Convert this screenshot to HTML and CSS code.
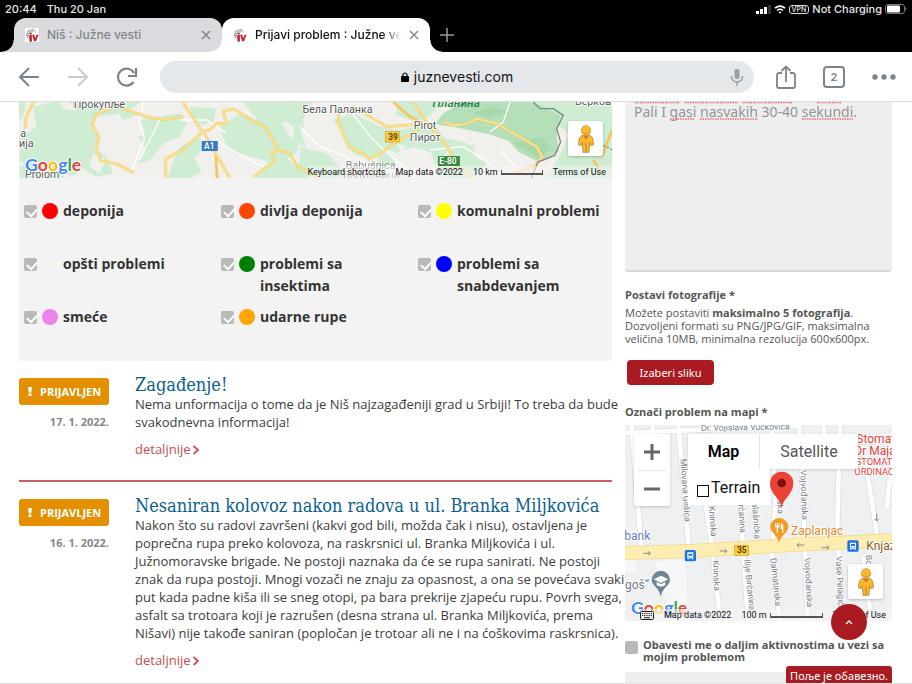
FILE: index.html
```html
<!DOCTYPE html>
<html lang="sr-Latn">
<head>
<meta charset="utf-8">
<meta name="viewport" content="width=device-width, initial-scale=1">
<title>Prijavi problem : Južne vesti</title>
<link rel="stylesheet" href="styles.css">
</head>
<body>
<svg class="defs" aria-hidden="true">
  <symbol id="logo" viewBox="0 0 42 42">
    <path d="M8 30a15 15 0 1 1 25-17M6 22a16 16 0 0 1 10-17M13 32a12 12 0 0 1 10-21M2 22h8M24 2v8M8 8l5 5" fill="none" stroke="#a5a5a8" stroke-width="3"/>
    <path d="M14 21h6v20h-6zM14 14h6v5h-6z" fill="#3d3d42"/>
    <path d="M13 20h7v18h-6zM21 20h7l3 11 4-11h6l-8 20h-6z" fill="#d3222f"/>
  </symbol>
  <symbol id="pegman" viewBox="0 0 48 84">
    <path d="M12 31h24l8 8 3 20-8 3-4-9-2 29H15l-2-29-4 9-8-3 3-20z" fill="#fbb829" stroke="#9b7636" stroke-width="2"/>
    <path d="M15 33h18l-9 11z" fill="#e5762b"/>
    <path d="M24 54v27" stroke="#c77f1f" stroke-width="3"/>
    <circle cx="24" cy="16" r="14" fill="#fbb829" stroke="#c08a2e" stroke-width="2"/>
    <path d="M11 22q13 9 26 0" fill="none" stroke="#e08a22" stroke-width="2"/>
  </symbol>
  <symbol id="chev" viewBox="0 0 8 12"><path d="M1.500 2l4.500 4-4.500 4" fill="none" stroke="currentColor" stroke-width="1.700"/></symbol>
  <symbol id="cross" viewBox="0 0 10 10"><path d="M1 1l8 8M9 1l-8 8" fill="none" stroke="currentColor" stroke-width="1.400"/></symbol>
  <symbol id="bus" viewBox="0 0 36 36">
    <rect x="1" y="1" width="34" height="34" rx="5" fill="#1a73e8"/>
    <path d="M9 8h18v18H9zM10 25h4v4h-4zM22 25h4v4h-4z" fill="#fff"/>
    <path d="M12 12h12v6H12zM12 21h3v3h-3zM21 21h3v3h-3z" fill="#1a73e8"/>
  </symbol>
</svg>

<header class="browser">
  <div class="status">
    <span>20:44</span><span>Thu 20 Jan</span>
    <div class="status-right">
      <svg width="15" height="9" viewBox="0 0 15 9" aria-hidden="true"><path d="M0 6h3v3H0zM4 4h3v5H4zM8 2h3v7H8z" fill="#fff"/><path d="M12 0h3v9h-3z" fill="#333"/></svg>
      <svg width="12" height="9" viewBox="0 0 12 9" aria-hidden="true"><path d="M1 3.200q5-4.200 10 0M3 5.500q3-2.500 6 0" fill="none" stroke="#fff" stroke-width="1.600"/><path d="M4.500 7q1.500-1 3 0L6 8.800z" fill="#fff"/></svg>
      <span class="vpn">VPN</span>
      <span>Not Charging</span>
      <svg width="22" height="10" viewBox="0 0 22 10" aria-hidden="true"><rect x=".5" y=".5" width="19" height="9" rx="2.500" fill="none" stroke="#777"/><rect x="2" y="1.500" width="13" height="7" rx="1" fill="#fff"/><path d="M21 3.500v3" stroke="#777"/></svg>
    </div>
  </div>
  <nav class="tabs" aria-label="Tabs">
    <div class="tab">
      <svg class="favicon on-white" aria-hidden="true"><use href="#logo"/></svg>
      <a class="tab-title" href="#">Niš : Južne vesti</a>
      <button class="plain" aria-label="Close tab"><svg width="10" height="10"><use href="#cross"/></svg></button>
    </div>
    <div class="tab active">
      <svg class="favicon" aria-hidden="true"><use href="#logo"/></svg>
      <a class="tab-title" href="#">Prijavi problem : Južne vesti</a>
      <button class="plain" aria-label="Close tab"><svg width="10" height="10"><use href="#cross"/></svg></button>
    </div>
    <button class="plain new-tab" aria-label="New tab"><svg width="14" height="14" viewBox="0 0 14 14"><path d="M7 0v14M0 7h14" stroke="#9a9a9d" stroke-width="1.500"/></svg></button>
  </nav>
  <div class="toolbar">
    <div class="nav-buttons">
      <button class="plain" aria-label="Back"><svg width="22" height="20" viewBox="0 0 22 20"><path d="M21 10H2M11 1l-9 9 9 9" fill="none" stroke="#7b8488" stroke-width="2"/></svg></button>
      <button class="plain" aria-label="Forward"><svg width="22" height="20" viewBox="0 0 22 20"><path d="M1 10h19M11 1l9 9-9 9" fill="none" stroke="#cacccd" stroke-width="2"/></svg></button>
      <button class="plain" aria-label="Reload"><svg width="22" height="20" viewBox="0 0 22 20"><path d="M17.500 15A8.500 8.500 0 1 1 18 6" fill="none" stroke="#7b8488" stroke-width="2.200"/><path d="M20 1v8h-8" fill="none" stroke="#7b8488" stroke-width="2.200"/></svg></button>
    </div>
    <div class="address">
      <svg width="8" height="10" viewBox="0 0 8 10" aria-hidden="true"><rect y="4" width="8" height="6" rx="1"/><path d="M2 5V3a2 2 0 0 1 4 0v2" fill="none" stroke="#000" stroke-width="1.200"/></svg>
      <span>juznevesti.com</span>
      <button class="plain mic" aria-label="Voice search"><svg width="14" height="18" viewBox="0 0 14 18"><rect x="4.500" y="1" width="5" height="10" rx="2.500" fill="#9a9fa4"/><path d="M1.500 8v1a5.500 5 0 0 0 11 0V8M7 14v4" fill="none" stroke="#9a9fa4" stroke-width="1.500"/></svg></button>
    </div>
    <div class="actions">
      <button class="plain" aria-label="Share"><svg width="20" height="24" viewBox="0 0 20 24"><path d="M6 8H3a2 2 0 0 0-2 2v11a2 2 0 0 0 2 2h14a2 2 0 0 0 2-2V10a2 2 0 0 0-2-2h-3M10 17V2M5.500 6L10 1.500 14.500 6" fill="none" stroke="#7b8488" stroke-width="1.800"/></svg></button>
      <button class="plain tab-count">2</button>
      <button class="plain" aria-label="Menu"><svg width="24" height="6" viewBox="0 0 24 6"><g fill="#7b8488"><circle cx="3" cy="3" r="2.700"/><circle cx="12" cy="3" r="2.700"/><circle cx="21" cy="3" r="2.700"/></g></svg></button>
    </div>
  </div>
</header>

<main class="page">
  <section class="reports">
    <div class="map region-map">
      <svg class="map-canvas" viewBox="58 6 1778 228" preserveAspectRatio="xMinYMin slice">
        <path fill="#f1f0ec" d="M58 6h1778v228H58z"/>
        <g fill="#ceedd2">
          <path d="M58 6h22l-8 40-14 20zM100 20l60-14h90l50 20 40-6 30 20-80 10-10 30 20 40-20 20 40 30 20 50-50 10-40-26-30 24-90-30-40 10-30-30 20-70 30-30zM340 6h80l-30 24 40 10-60 20z"/>
          <path d="M420 60l120-20 20 30-20 40-50 20-40 50-34 10 20-50-20-30 20-10zM540 140l60-26 14 30-30 30 20 40-30 20h-70l20-60zM570 20l80 6-10 40-36 10-24-20zM660 80l60-40 50 20 10-20 60 20 30 50 30 10-10 40-60 40-40-20-70-20-40-20-10-30zM730 6h180v90l-50-30-60 10-40-30zM60 90l40 10 20 50-60 40zM60 200l60-20 80 54H60z"/>
          <path d="M780 210l60-50 40 30 40 0 40 44H770zM890 6h50l-20 30-20 50 20 60-40-30zM1000 60l60-20 80 40 60 10 20 30-60 20-50 40-50-20-30-60zM1200 90l100-20 40 50-40 40-60-20-50 20-40-20zM1290 110l80 10 60 20 30 50-40 44h-90l-30-50zM1190 6h140l-40 40-40 20-60-20zM900 140l80 20 60 60-10 14H900zM1130 150l40 10 20 40-50 10zM1600 6h236v228h-200l40-60 30-70z"/>
        </g>
        <path fill="#b5dfb8" d="M1330 40l60-34h200l30 10 60 30-10 60 6 50-60 30-60-30-30-34-60-20-100-20-60-10z"/>
        <path fill="#a3d4a7" opacity=".7" d="M1420 40l60-20 50 20-70 10zM1540 130l80-20 30 30-30 40-30-20z"/>
        <path fill="#f1f0ec" d="M280 160l40 20-20 40-30-20zM180 6h30l20 26-40-6zM1420 140l60 10 40 30-40 14-50-20zM1190 130l30 10-16 20z"/>
        <path d="M430 6l-10 60 14 50-40 100M480 60l-60 120M540 60l80 0 60 40M650 120l80 50 60 30M900 80l60 60 80 30 40 50M1040 20l80 100 90 80M1290 150l100-10 80 50M1530 6l-20 60-40 30M1350 150l-50 60M1500 150l50 50" fill="none" stroke="#fff" stroke-width="4"/>
        <path d="M102 6L80 50l-4 36M340 22l-50 20-12 30 20 40-8 30 12 40 50 10 50 26M360 22l80 28 60 10 50-12M548 6l60 90-60 54-50 26v58M600 96l30-6 20-20h30l-10-36 30-8 40 24 30 20 26 10 40 70-20 6 6 30-60 44M830 150l40 10 24 40 60 30M1016 30l0 40 30 70 50 24 10 14 40-20 30-24 80-44M1060 20l100 60 80-6M1330 66l30 10 40-4 30-16 60 14 40 24 80 46 16 30-20 26-60 24M1836 90l-30 80M1780 180l20 30M610 94l40 70 40 70M648 160l4 74M1240 6l40 60 60 70 30 60 50 38M1290 80l-60-30-50-44" fill="none" stroke="#f5c65c" stroke-width="8" stroke-linejoin="round"/>
        <path d="M102 6L80 50l-4 36M340 22l-50 20-12 30 20 40-8 30 12 40 50 10 50 26M360 22l80 28 60 10 50-12M548 6l60 90-60 54-50 26v58M600 96l30-6 20-20h30l-10-36 30-8 40 24 30 20 26 10 40 70-20 6 6 30-60 44M830 150l40 10 24 40 60 30M1016 30l0 40 30 70 50 24 10 14 40-20 30-24 80-44M1060 20l100 60 80-6M1330 66l30 10 40-4 30-16 60 14 40 24 80 46 16 30-20 26-60 24M1240 6l40 60 60 70 30 60 50 38M610 94l40 70 40 70" fill="none" stroke="#fbe493" stroke-width="5"/>
        <path d="M1600 6l20 20h40l30 20-20 40 12 40-18 40-50 20-20 48" fill="none" stroke="#7d8a80" stroke-width="4"/>
        <path d="M1800 130l36 20" stroke="#7d8a80" stroke-width="4" stroke-dasharray="6 6"/>
        <rect x="606" y="123" width="48" height="30" fill="#3a76c4"/>
        <rect x="1157" y="95" width="42" height="31" fill="#fbcb3b" stroke="#d8a41c" stroke-width="2"/>
        <rect x="1314" y="168" width="66" height="30" fill="#3a8a3f"/>
        <g class="road-no"><text x="613" y="147" fill="#fff">A1</text><text x="1165" y="119" fill="#4c3c0a">39</text><text x="1318" y="192" fill="#fff">E-80</text></g>
        <g class="place">
          <text x="222" y="24">Прокупље</text><text x="62" y="110">а</text><text x="58" y="141">ија</text>
          <text x="908" y="39">Бела Паланка</text><text x="1242" y="86">Pirot</text><text x="1230" y="122">Пирот</text>
          <text x="1725" y="16">Берков</text><text x="76" y="233">Prolom</text><text x="1038" y="207" opacity=".7">Babušnica</text><text x="1030" y="238" opacity=".7">Бабушница</text>
        </g>
        <text class="mountain" x="1298" y="21">Планина</text>
        <text class="google" x="76" y="213"><tspan fill="#4285f4">G</tspan><tspan fill="#ea4335">o</tspan><tspan fill="#fbbc05">o</tspan><tspan fill="#4285f4">g</tspan><tspan fill="#34a853">l</tspan><tspan fill="#ea4335">e</tspan></text>
      </svg>
      <button class="pegman" aria-label="Street View"><svg width="16" height="28"><use href="#pegman"/></svg></button>
      <div class="map-footer">
        <span>Keyboard shortcuts</span><span>Map data ©2022</span><span class="scale-label">10 km <i class="scale"></i></span><a href="#">Terms of Use</a>
      </div>
    </div>

    <form class="legend">
      <label><input type="checkbox" checked><i class="dot red"></i><span>deponija</span></label>
      <label><input type="checkbox" checked><i class="dot orangered"></i><span>divlja deponija</span></label>
      <label><input type="checkbox" checked><i class="dot yellow"></i><span>komunalni problemi</span></label>
      <label><input type="checkbox" checked><i class="dot"></i><span>opšti problemi</span></label>
      <label><input type="checkbox" checked><i class="dot green"></i><span>problemi sa insektima</span></label>
      <label><input type="checkbox" checked><i class="dot blue"></i><span>problemi sa snabdevanjem</span></label>
      <label><input type="checkbox" checked><i class="dot violet"></i><span>smeće</span></label>
      <label><input type="checkbox" checked><i class="dot orange"></i><span>udarne rupe</span></label>
    </form>

    <article class="report">
      <div class="meta">
        <span class="badge"><svg width="4" height="9" viewBox="0 0 4 9" aria-hidden="true"><path d="M0 0h4L3.300 5.500H.7zM.5 6.500h3V9h-3z" fill="#fff"/></svg>PRIJAVLJEN</span>
        <time datetime="2022-01-17">17. 1. 2022.</time>
      </div>
      <div class="body">
        <h2><a href="#">Zagađenje!</a></h2>
        <p>Nema unformacija o tome da je Niš najzagađeniji grad u Srbiji! To treba da bude svakodnevna informacija!</p>
        <a class="more" href="#">detaljnije <svg width="8" height="12" aria-hidden="true"><use href="#chev"/></svg></a>
      </div>
    </article>
    <article class="report">
      <div class="meta">
        <span class="badge"><svg width="4" height="9" viewBox="0 0 4 9" aria-hidden="true"><path d="M0 0h4L3.300 5.500H.7zM.5 6.500h3V9h-3z" fill="#fff"/></svg>PRIJAVLJEN</span>
        <time datetime="2022-01-16">16. 1. 2022.</time>
      </div>
      <div class="body">
        <h2><a href="#">Nesaniran kolovoz nakon radova u ul. Branka Miljkovića</a></h2>
        <p>Nakon što su radovi završeni (kakvi god bili, možda čak i nisu), ostavljena je poprečna rupa preko kolovoza, na raskrsnici ul. Branka Miljkovića i ul. Južnomoravske brigade. Ne postoji naznaka da će se rupa sanirati. Ne postoji znak da rupa postoji. Mnogi vozači ne znaju za opasnost, a ona se povećava svaki put kada padne kiša ili se sneg otopi, pa bara prekrije zjapeću rupu. Povrh svega, asfalt sa trotoara koji je razrušen (desna strana ul. Branka Miljkovića, prema Nišavi) nije takođe saniran (popločan je trotoar ali ne i na ćoškovima raskrsnica).</p>
        <a class="more" href="#">detaljnije <svg width="8" height="12" aria-hidden="true"><use href="#chev"/></svg></a>
      </div>
    </article>
  </section>

  <form class="report-form">
    <div class="description">
      <textarea aria-label="Opis problema" spellcheck="false">Pali I gasi nasvakih 30-40 sekundi.</textarea>
      <svg class="spelling" width="250" height="20" viewBox="0 0 250 20" aria-hidden="true"><path d="M10 .5h44M60 .5h53M118 .5h50M192 .5h25M45 17h25M75 17h58M177 17h51" fill="none" stroke="#f2695f" stroke-width="1.500" stroke-dasharray="1.500 1"/></svg>
    </div>
    <h3>Postavi fotografije *</h3>
    <p class="hint">Možete postaviti <strong>maksimalno 5 fotografija</strong>. Dozvoljeni formati su PNG/JPG/GIF, maksimalna veličina 10MB, minimalna rezolucija 600x600px.</p>
    <button type="button" class="choose">Izaberi sliku</button>
    <h3>Označi problem na mapi *</h3>
    <div class="map street-map">
      <svg class="map-canvas" viewBox="30 30 801 588" preserveAspectRatio="xMinYMin slice">
        <path fill="#eef0f2" d="M30 30h801v588H30z"/>
        <path fill="#f6f7f8" d="M30 470h40l-20-60H30zM120 440l90-6 10 184h-50z"/>
        <path d="M30 54l520-22M50 30L80 414M112 30l4 22M190 30l18 200 14 180M268 240l22 150 26 228M375 260l24 358M418 260l8 130M470 30l12 220-12 170 24 198M552 30l8 110 18 478M675 30l-8 300 14 288M750 130l36 230M745 420l24 198M831 130l-16 150M625 30l6 50h150" fill="none" stroke="#d8dce0" stroke-width="18"/>
        <path d="M30 54l520-22M50 30L80 414M112 30l4 22M190 30l18 200 14 180M268 240l22 150 26 228M375 260l24 358M418 260l8 130M470 30l12 220-12 170 24 198M552 30l8 110 18 478M675 30l-8 300 14 288M750 130l36 230M745 420l24 198M831 130l-16 150M625 30l6 50h150" fill="none" stroke="#fff" stroke-width="14"/>
        <path d="M30 414l200-6 300-18 301-14" fill="none" stroke="#f6d98a" stroke-width="42"/>
        <path d="M30 414l200-6 300-18 301-14" fill="none" stroke="#fdedb0" stroke-width="37"/>
        <g fill="none" stroke="#8c8a80" stroke-width="3"><path d="M84 415h22m-7-6l7 6-7 6M314 408h22m-7-6l7 6-7 6M568 390h-22m7-6l-7 6 7 6M620 398h22m-7-6l7 6-7 6M785 296v22m-6-7l6 7 6-7"/></g>
        <rect x="359" y="391" width="42" height="30" fill="#fbcb3b" stroke="#d8a41c" stroke-width="2"/>
        <text class="road-no" x="366" y="415" fill="#4c3c0a">35</text>
        <g class="street">
          <text x="258" y="48" transform="rotate(-1 258 48)">Dr. Vojislava Vučkovića</text>
          <text transform="translate(196 132) rotate(86)">Milovana Glišića</text>
          <text transform="translate(282 274) rotate(86)">Kninska</text>
          <text transform="translate(293 436) rotate(87)">Kninska</text>
          <text transform="translate(368 246) rotate(86)">Birčanina</text>
          <text transform="translate(410 246) rotate(86)">Dalašnička</text>
          <text transform="translate(387 434) rotate(84)">Ilije Birčanina</text>
          <text transform="translate(466 430) rotate(84)">Dalmatinska</text>
          <text transform="translate(486 256) rotate(87)">ska</text>
          <text transform="translate(556 166) rotate(88)">Vojvođanska</text>
          <text transform="translate(568 428) rotate(87)">Vojvođanska</text>
          <text transform="translate(662 424) rotate(87)">Vase Pelagića</text>
          <text transform="translate(752 420) rotate(87)">Bože</text>
        </g>
        <use href="#bus" x="208" y="404" width="36" height="36"/>
        <use href="#bus" x="696" y="375" width="36" height="36"/>
        <g class="poi">
          <text x="28" y="374" fill="#7179bd">bank</text><text x="30" y="521" fill="#6f7c85">goš“</text>
          <text x="528" y="361" fill="#e8861f">Zaplanjac</text><text x="754" y="405" fill="#8b5a20">Knjaz</text>
          <text x="724" y="84" fill="#e3413b">Stomat</text><text x="718" y="120" fill="#e3413b">Dr Maja</text>
        </g>
        <g class="poi small" fill="#e3413b"><text x="722" y="150">STOMATO</text><text x="718" y="180">ORDINACIJA</text></g>
        <path d="M137 546c-3-28-27-34-27-51a27 27 0 0 1 55 0c0 17-24 23-28 51z" fill="#6c8793"/>
        <path d="M116 493l22-11 22 11-22 11zM125 501v9q13 9 26 0v-9l-13 7z" fill="#fff"/>
        <path d="M492 385c-3-25-26-32-26-49a27 27 0 0 1 54 0c0 17-24 24-28 49z" fill="#f29c1f"/>
        <path d="M480 325v12h5v16h4v-16h5v-12h-3v8h-2v-8h-3v8h-2v-8zM498 325q8 0 7 13v15h-4v-11h-4z" fill="#fff"/>
        <path d="M500 280c-3-32-35-40-35-75a35 35 0 0 1 70 0c0 35-31 43-35 75z" fill="#ea4335"/>
        <circle cx="500" cy="204" r="13" fill="#7e0f0f"/>
        <text class="google" x="48" y="596"><tspan fill="#4285f4">G</tspan><tspan fill="#ea4335">o</tspan><tspan fill="#fbbc05">o</tspan><tspan fill="#4285f4">g</tspan><tspan fill="#34a853">l</tspan><tspan fill="#ea4335">e</tspan></text>
      </svg>
      <div class="zoom">
        <button type="button" class="plain" aria-label="Zoom in"><svg width="16" height="16" viewBox="0 0 16 16"><path d="M8 0v16M0 8h16" stroke="#666" stroke-width="3"/></svg></button>
        <button type="button" class="plain" aria-label="Zoom out"><svg width="16" height="16" viewBox="0 0 16 16"><path d="M0 8h16" stroke="#666" stroke-width="3"/></svg></button>
      </div>
      <div class="map-type">
        <div class="types"><button type="button" class="plain current">Map</button><button type="button" class="plain">Satellite</button></div>
        <label class="terrain"><input type="checkbox">Terrain</label>
      </div>
      <button type="button" class="pegman" aria-label="Street View"><svg width="16" height="28"><use href="#pegman"/></svg></button>
      <div class="map-footer">
        <svg width="14" height="9" viewBox="0 0 14 9" aria-hidden="true"><rect x=".5" y=".5" width="13" height="8" rx="1" fill="#eee" stroke="#222"/><path d="M2 2.500h10M2 4.500h10" stroke="#222" stroke-dasharray="1.200 1"/><path d="M4 6.700h6" stroke="#222"/></svg>
        <span>Map data ©2022</span><span class="scale-label">100 m <i class="scale wide"></i></span><a href="#">Terms of Use</a>
      </div>
      <a class="to-top" href="#" aria-label="Na vrh"><svg width="8" height="6" viewBox="0 0 8 6"><path d="M1 5l3-3 3 3" fill="none" stroke="#fff" stroke-width="1.300"/></svg></a>
    </div>
    <label class="notify"><input type="checkbox"><span>Obavesti me o daljim aktivnostima u vezi sa mojim problemom</span></label>
    <div class="captcha"><span class="error" role="alert">Поље је обавезно.</span></div>
  </form>
</main>
</body>
</html>
```
FILE: styles.css
```css
* { box-sizing: border-box; }

body {
  margin: 0;
  height: 100vh;
  display: flex;
  flex-direction: column;
  overflow: hidden;
  background: #fff;
  color: #3c3c3c;
  font-family: "Open Sans", "Noto Sans", sans-serif;
  font-size: 13px;
}

a { color: inherit; text-decoration: none; }
h2, h3, p { margin: 0; }
.defs { position: absolute; width: 0; height: 0; }
.plain {
  display: flex;
  align-items: center;
  justify-content: center;
  padding: 0;
  border: 0;
  background: none;
  color: inherit;
  font: inherit;
}

/* Browser chrome */
.browser {
  flex: none;
  background: #000;
  font-family: Inter, sans-serif;
}
.status {
  display: flex;
  align-items: center;
  gap: 10px;
  height: 18px;
  padding: 0 5px;
  color: #e8e8e8;
  font-size: 11px;
  font-weight: 500;
}
.status-right { display: flex; align-items: center; gap: 3px; margin-left: auto; }
.vpn {
  padding: 0 2px;
  border: 1px solid #ddd;
  border-radius: 3px;
  font-size: 7px;
  line-height: 7px;
}
.tabs { display: flex; height: 34px; padding-left: 14px; }
.tab {
  display: flex;
  align-items: center;
  gap: 8px;
  width: 208px;
  padding: 0 11px;
  border-radius: 12px 12px 0 0;
  background: #dadbdf;
  color: #80878b;
  font-size: 12px;
  font-weight: 500;
}
.tab.active {
  position: relative;
  background: #fff;
  color: #111;
}
.tab.active::before, .tab.active::after, .tabs::before {
  content: "";
  position: absolute;
  width: 12px;
  height: 12px;
}
.tab.active::before {
  left: -12px;
  bottom: 0;
  background: radial-gradient(circle at 0 0, #dadbdf 11px, #fff 12px);
}
.tab.active::after {
  right: -12px;
  bottom: 0;
  background: radial-gradient(circle at 100% 0, #000 11px, #fff 12px);
}
.tabs::before {
  left: 2px;
  top: 40px;
  background: radial-gradient(circle at 0 0, #000 11px, #dadbdf 12px);
}
.tab-title {
  flex: 1;
  min-width: 0;
  overflow: hidden;
  line-height: 20px;
  white-space: nowrap;
}
.tab.active .tab-title {
  -webkit-mask-image: linear-gradient(to right, #000 88%, transparent);
  mask-image: linear-gradient(to right, #000 88%, transparent);
}
.tab .plain { color: #7b8488; }
.favicon { flex: none; width: 14px; height: 14px; }
.on-white { background: #fff; }
.new-tab { margin-left: 10px; }

.toolbar {
  display: flex;
  align-items: center;
  gap: 22px;
  height: 50px;
  padding: 0 16px 0 18px;
  border-bottom: 1px solid #ddd;
  background: #fff;
}
.nav-buttons { display: flex; gap: 27px; }
.address {
  position: relative;
  flex: 1;
  display: flex;
  align-items: center;
  justify-content: center;
  gap: 5px;
  height: 32px;
  border-radius: 16px;
  background: #e5e8eb;
  color: #111;
  font-size: 14px;
}
.mic { position: absolute; right: 10px; top: 7px; }
.actions { display: flex; align-items: center; gap: 27px; }
.tab-count {
  width: 22px;
  height: 22px;
  border: 2px solid #7b8488;
  border-radius: 4px;
  color: #7b8488;
  font-size: 11px;
  font-weight: 600;
}

/* Page */
.page {
  flex: 1;
  min-height: 0;
  display: grid;
  grid-template-columns: 593fr 267fr;
  gap: 13px;
  padding: 0 20px 0 19px;
  overflow: hidden;
  border-bottom: 1px solid #e3e3e3;
}
.reports, .report-form { min-width: 0; }

.map {
  position: relative;
  font-family: Roboto, sans-serif;
}
.map-canvas { display: block; width: 100%; height: 100%; }
.region-map { height: 76px; }
.road-no { font-size: 25px; font-weight: 600; }
.place { fill: #555; font-size: 32px; }
.place, .poi, .street { stroke: #fff; stroke-width: 5px; paint-order: stroke; }
.mountain { fill: #27834a; font-size: 36px; font-style: italic; font-weight: 500; }
.google {
  font-family: Lato, sans-serif;
  font-size: 53px;
  font-weight: 700;
  stroke: #fff;
  stroke-width: 5px;
  paint-order: stroke;
}
.street { fill: #747d85; font-size: 26px; }
.poi { font-size: 36px; }
.poi.small { font-size: 28px; }
.map-footer {
  position: absolute;
  right: 0;
  bottom: 0;
  display: flex;
  align-items: center;
  gap: 10px;
  height: 12px;
  padding-right: 6px;
  color: #111;
  background: rgb(245 245 245 / 55%);
  font-size: 9px;
  white-space: nowrap;
}
.scale-label { display: flex; align-items: center; gap: 3px; }
.scale {
  width: 42px;
  height: 5px;
  border: 1px solid #555;
  border-width: 0 1px 2px;
}
.scale.wide { width: 53px; }
.pegman {
  position: absolute;
  right: 9px;
  bottom: 22px;
  display: flex;
  align-items: center;
  justify-content: center;
  width: 35px;
  height: 35px;
  padding: 0;
  border: 0;
  border-radius: 2px;
  background: #fff;
  box-shadow: 0 1px 3px rgb(0 0 0 / 25%);
}

.legend {
  display: grid;
  grid-template-columns: repeat(3, 1fr);
  grid-auto-rows: 53px;
  height: 183px;
  padding: 22px 2px 0 0;
  background: #f3f3f3;
}
.legend label {
  display: flex;
  align-items: flex-start;
  padding: 0 5px;
  color: #333;
  font-size: 14px;
  font-weight: 700;
  line-height: 22px;
}
.legend span { flex: 1; }
input[type="checkbox"] {
  flex: none;
  appearance: none;
  width: 13px;
  height: 13px;
  margin: 0;
  border-radius: 2px;
  background: #b9b9b9;
}
.legend input { margin-top: 5px; }
.legend input:checked::after {
  content: "";
  display: block;
  width: 8px;
  height: 5px;
  margin: 3px 0 0 3px;
  border: solid #fff;
  border-width: 0 0 2px 2px;
  transform: rotate(-48deg);
}
.dot {
  flex: none;
  width: 16px;
  height: 16px;
  margin: 3px 5px 0;
  border-radius: 50%;
}
.red { background: #f00; }
.orangered { background: #ff4500; }
.yellow { background: #ff0; }
.green { background: #008000; }
.blue { background: #00f; }
.violet { background: #ee82ee; }
.orange { background: #ffa500; }

.report {
  display: grid;
  grid-template-columns: 90px 1fr;
  gap: 26px;
  padding: 13px 0 22px;
}
.report + .report { border-top: 2px solid #cb5c63; }
.meta {
  display: flex;
  flex-direction: column;
  gap: 9px;
  padding-top: 4px;
  font-size: 11px;
  font-weight: 700;
}
.badge {
  display: flex;
  align-items: center;
  gap: 8px;
  height: 27px;
  padding-left: 9px;
  border-radius: 3px;
  background: #e38f00;
  color: #fff;
}
.meta time { color: #888; text-align: right; }
.body { min-width: 0; }
.report h2 {
  color: #0b5e91;
  font-family: "DejaVu Serif Condensed", "DejaVu Serif", serif;
  font-size: 18px;
  font-weight: 400;
  line-height: 21px;
  white-space: nowrap;
}
/* Report text may run into the column gutter */
.report p { margin-right: -13px; line-height: 18px; }
.more {
  display: block;
  margin-top: 9px;
  color: #c94c54;
  line-height: 18px;
}
.more svg { margin-left: -2px; vertical-align: -2px; }

/* Report form */
.report-form { color: #555; font-size: 11px; }
.description { position: relative; }
.description textarea {
  display: block;
  width: 100%;
  height: 170px;
  padding: 0 9px;
  border: 0;
  border-bottom: 2px solid #d6d6d6;
  border-radius: 0 0 4px 4px;
  background: #eee;
  color: #959595;
  font: 14px/19px "Noto Sans", sans-serif;
  resize: none;
  outline: 0;
}
.spelling { position: absolute; left: 0; top: 0; }
.report-form h3 { font-size: 11px; line-height: 15px; }
.description + h3 { margin-top: 15px; }
.hint { margin-top: 4px; line-height: 13px; }
.choose {
  display: block;
  width: 87px;
  height: 25px;
  margin: 15px 0 19px 2px;
  padding: 0;
  border: 0;
  border-radius: 4px;
  background: #a91b20;
  color: #fff;
  font: 11px "Noto Sans", sans-serif;
}
.street-map { height: 196px; margin-top: 6px; }
.zoom {
  position: absolute;
  left: 9px;
  top: 9px;
  width: 36px;
  padding: 0 4px;
  border-radius: 2px;
  background: #fff;
  box-shadow: 0 1px 3px rgb(0 0 0 / 20%);
}
.zoom button { width: 100%; height: 36px; }
.zoom button + button { border-top: 1px solid #e6e6e6; }
.map-type { position: absolute; left: 63px; top: 9px; font-size: 16px; }
.types { display: flex; background: #fff; box-shadow: 0 1px 3px rgb(0 0 0 / 15%); }
.types button { width: 98px; height: 35px; color: #565656; }
.types .current {
  width: 72px;
  border-right: 1px solid #e6e6e6;
  color: #000;
  font-weight: 600;
}
.terrain {
  display: flex;
  align-items: center;
  gap: 2px;
  width: 82px;
  height: 36px;
  padding-left: 9px;
  background: #fff;
  color: #111;
}
.terrain input[type="checkbox"] {
  width: 12px;
  height: 12px;
  margin-top: 8px;
  border: 1px solid #111;
  border-radius: 0;
  background: #fff;
}
.to-top {
  position: absolute;
  right: 25px;
  bottom: -19px;
  display: flex;
  align-items: center;
  justify-content: center;
  width: 36px;
  height: 36px;
  border-radius: 50%;
  background: #a91b20;
}
.notify {
  display: flex;
  gap: 5px;
  margin-top: 18px;
  font-weight: 700;
  line-height: 12px;
}
.notify input { margin-top: 2px; }
.captcha {
  position: relative;
  height: 60px;
  margin-top: 9px;
  border-radius: 4px;
  background: #eee;
}
.error {
  position: absolute;
  right: 0;
  top: -6px;
  padding: 0 4px;
  border-radius: 3px 3px 0 0;
  background: #a91b20;
  color: #fff;
  font: 11px/20px "Noto Sans", sans-serif;
}
```
